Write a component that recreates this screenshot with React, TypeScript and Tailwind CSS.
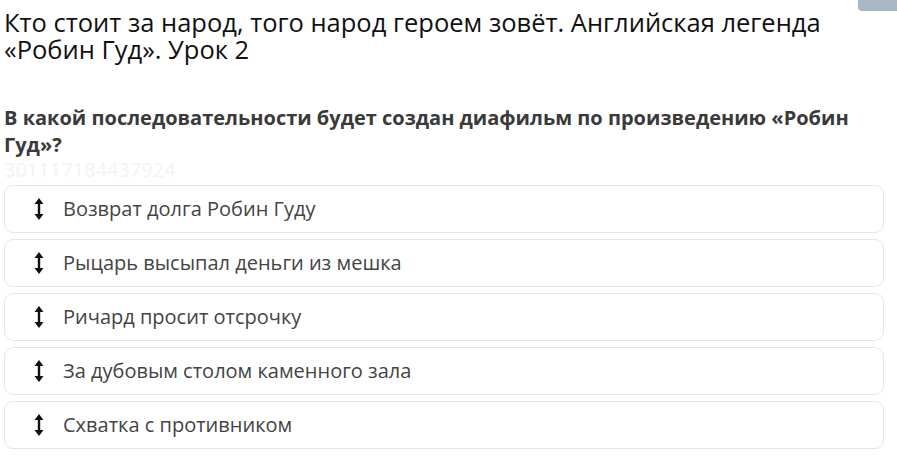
const items = [
  "Возврат долга Робин Гуду",
  "Рыцарь высыпал деньги из мешка",
  "Ричард просит отсрочку",
  "За дубовым столом каменного зала",
  "Схватка с противником",
];

const MoveIcon = () => (
  <svg width="10" height="22" viewBox="0 0 10 22" fill="#111">
    <path d="M5 0 L9.5 6 L6.2 6 L6.2 16 L9.5 16 L5 22 L0.5 16 L3.8 16 L3.8 6 L0.5 6 Z" />
  </svg>
);

export default function App() {
  return (
    <div className="relative w-[897px] h-[470px] overflow-hidden bg-white font-['Open_Sans',sans-serif]">
      <div className="absolute top-0 right-0 w-[39px] h-[11px] bg-[#a9b6c4] rounded-bl-[4px]" />
      <div className="px-[4px] pt-[9px]">
        <h1 className="text-[25.5px] leading-[27px] text-[#111] font-normal">
          Кто стоит за народ, того народ героем зовёт. Английская легенда
          «Робин Гуд». Урок 2
        </h1>
        <p className="mt-[41px] text-[20px] leading-[27px] font-bold text-[#3a3a3a] pr-[16px]">
          В какой последовательности будет создан диафильм по произведению «Робин
          Гуд»?
        </p>
        <div className="text-[20px] leading-[26px] text-[#f3f3f3] -mt-[1px]">
          301117184437924
        </div>
        <div className="flex flex-col gap-[6px] w-[880px] mt-[2px]">
          {items.map((t) => (
            <div
              key={t}
              className="flex items-center h-[48px] border border-[#e6e6e6] rounded-[9px] bg-white"
            >
              <div className="w-[58px] flex justify-center pl-[10px]">
                <MoveIcon />
              </div>
              <span className="text-[20px] text-[#444] leading-none">{t}</span>
            </div>
          ))}
        </div>
      </div>
    </div>
  );
}
